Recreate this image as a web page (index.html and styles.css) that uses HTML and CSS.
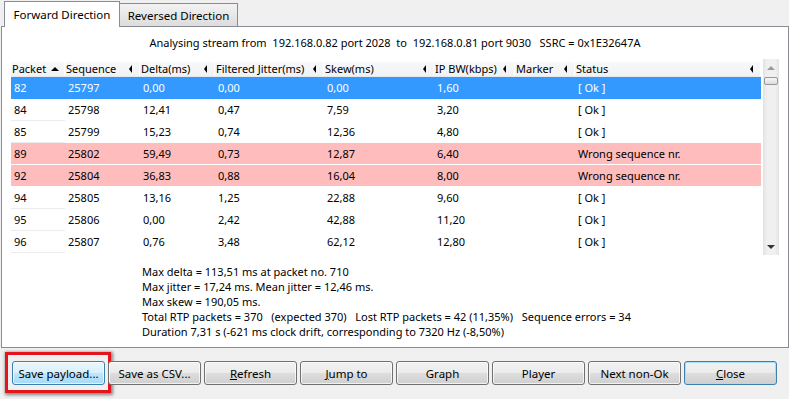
FILE: index.html
```html
<!DOCTYPE html>
<html lang="en">
<head>
<meta charset="UTF-8">
<title>RTP Stream Analysis</title>
<link rel="stylesheet" href="styles.css">
</head>
<body>

<div class="tabs">
    <div class="tab active">Forward Direction</div>
    <div class="tab">Reversed Direction</div>
</div>

<div class="panel">
    <div class="caption">Analysing stream from  192.168.0.82 port 2028  to  192.168.0.81 port 9030   SSRC = 0x1E32647A</div>

    <div class="list">
        <div class="grid">
            <div class="head">
                <div class="hcell"><span class="htext">Packet</span><i class="arrow-up"></i></div>
                <div class="hcell"><span class="htext">Sequence</span><i class="arrow-left"></i></div>
                <div class="hcell"><span class="htext">Delta(ms)</span><i class="arrow-left"></i></div>
                <div class="hcell"><span class="htext">Filtered Jitter(ms)</span><i class="arrow-left"></i></div>
                <div class="hcell"><span class="htext">Skew(ms)</span><i class="arrow-left"></i></div>
                <div class="hcell narrow"><span class="htext">IP BW(kbps)</span><i class="arrow-left"></i></div>
                <div class="hcell"><span class="htext">Marker</span><i class="arrow-left"></i></div>
                <div class="hcell"><span class="htext">Status</span><i class="arrow-left"></i></div>
            </div>

            <div class="row selected">
                <span>82</span><span>25797</span><span>0,00</span><span>0,00</span><span>0,00</span><span>1,60</span><span></span><span>[ Ok ]</span>
            </div>
            <div class="row">
                <span>84</span><span>25798</span><span>12,41</span><span>0,47</span><span>7,59</span><span>3,20</span><span></span><span>[ Ok ]</span>
            </div>
            <div class="row">
                <span>85</span><span>25799</span><span>15,23</span><span>0,74</span><span>12,36</span><span>4,80</span><span></span><span>[ Ok ]</span>
            </div>
            <div class="row error">
                <span>89</span><span>25802</span><span>59,49</span><span>0,73</span><span>12,87</span><span>6,40</span><span></span><span>Wrong sequence nr.</span>
            </div>
            <div class="row error">
                <span>92</span><span>25804</span><span>36,83</span><span>0,88</span><span>16,04</span><span>8,00</span><span></span><span>Wrong sequence nr.</span>
            </div>
            <div class="row">
                <span>94</span><span>25805</span><span>13,16</span><span>1,25</span><span>22,88</span><span>9,60</span><span></span><span>[ Ok ]</span>
            </div>
            <div class="row">
                <span>95</span><span>25806</span><span>0,00</span><span>2,42</span><span>42,88</span><span>11,20</span><span></span><span>[ Ok ]</span>
            </div>
            <div class="row">
                <span>96</span><span>25807</span><span>0,76</span><span>3,48</span><span>62,12</span><span>12,80</span><span></span><span>[ Ok ]</span>
            </div>
        </div>

        <div class="scrollbar">
            <div class="sb-btn"><i class="sb-up"></i></div>
            <div class="sb-thumb"></div>
            <div class="sb-track"></div>
            <div class="sb-btn"><i class="sb-down"></i></div>
        </div>
    </div>

    <div class="stats">Max delta = 113,51 ms at packet no. 710
Max jitter = 17,24 ms. Mean jitter = 12,46 ms.
Max skew = 190,05 ms.
Total RTP packets = 370   (expected 370)   Lost RTP packets = 42 (11,35%)   Sequence errors = 34
Duration 7,31 s (-621 ms clock drift, corresponding to 7320 Hz (-8,50%)</div>
</div>

<div class="buttons">
    <div class="mark"><button class="btn hot">Save payload...</button></div>
    <button class="btn">Save as CSV...</button>
    <button class="btn"><u>R</u>efresh</button>
    <button class="btn"><u>J</u>ump to</button>
    <button class="btn">Graph</button>
    <button class="btn">Player</button>
    <button class="btn">Next non-Ok</button>
    <button class="btn default"><u>C</u>lose</button>
</div>

</body>
</html>
```

FILE: styles.css
```css
body {
    margin: 0;
    width: 789px;
    height: 399px;
    overflow: hidden;
    background-color: #f0f0f0;
    font-family: "Noto Sans", sans-serif;
    font-size: 11px;
    color: #000;
}
.tabs {
    display: flex;
    align-items: flex-end;
    height: 26px;
    padding-left: 4px;
    font-size: 11.5px;
}
.tab {
    box-sizing: border-box;
    width: 118px;
    height: 23px;
    line-height: 23px;
    text-align: center;
    border: 1px solid #898c95;
    border-bottom: none;
    border-left: none;
    background: linear-gradient(#f3f3f3, #e6e6e6 55%, #dcdcdc);
}
.tab.active {
    position: relative;
    z-index: 1;
    width: 116px;
    height: 26px;
    margin-bottom: -1px;
    line-height: 26px;
    border-left: 1px solid #898c95;
    background-color: #fff;
    background-image: none;
}
.panel {
    width: 786px;
    height: 320px;
    margin-left: 1px;
    border: 1px solid #898c95;
    background-color: #fff;
}
.caption {
    padding-top: 8px;
    line-height: 16px;
    text-align: center;
    white-space: pre;
}
.list {
    display: flex;
    height: 196px;
    margin: 8px 0 0 9px;
}
.grid {
    width: 750px;
}
.head, .row {
    display: grid;
    grid-template-columns: 54px 75px 75px 109px 110px 81px 60px 186px;
}
.head {
    height: 17px;
    padding-top: 2px;
    box-sizing: border-box;
    background: linear-gradient(#f8f9fa, #f1f2f4);
    box-shadow: inset 0 3px #fff, 0 1px #e7e8ea;
}
.hcell {
    display: flex;
    align-items: center;
    padding: 0 7px 0 1px;
    border-right: 1px solid #fff;
    overflow: hidden;
}
.hcell.narrow {
    padding-right: 9px;
}
.htext {
    flex: 1;
    overflow: hidden;
    white-space: nowrap;
}
.narrow .htext {
    flex: none;
    width: 66px;
    margin-right: 2px;
}
.arrow-left {
    width: 0;
    height: 0;
    border-top: 4px solid transparent;
    border-bottom: 4px solid transparent;
    border-right: 3px solid #000;
}
.arrow-up {
    width: 0;
    height: 0;
    margin-right: -2px;
    border-left: 4px solid transparent;
    border-right: 4px solid transparent;
    border-bottom: 4px solid #000;
}
.row {
    height: 22px;
    line-height: 22px;
}
.head + .row {
    margin-top: 1px;
}
.row span {
    padding-left: 3px;
    white-space: nowrap;
}
.row span:first-child {
    box-shadow: inset 0 -1px #ececec;
}
.row.selected {
    background-color: #3399ff;
    color: #fff;
}
.row.selected span:first-child,
.row.error span:first-child {
    box-shadow: none;
}
.row.error {
    background-color: #ffbcbc;
    box-shadow: inset 0 -1px #fff;
}
.scrollbar {
    display: flex;
    flex-direction: column;
    width: 16px;
    margin-left: 2px;
    background: linear-gradient(to right, #e2e2e2, #f0f0f0 25%, #f0f0f0 75%, #e4e4e4);
}
.sb-btn {
    height: 17px;
    display: flex;
    align-items: center;
    justify-content: center;
}
.sb-up {
    border-left: 4px solid transparent;
    border-right: 4px solid transparent;
    border-bottom: 4px solid #9a9a9a;
}
.sb-down {
    border-left: 4px solid transparent;
    border-right: 4px solid transparent;
    border-top: 4px solid #333;
}
.sb-thumb {
    height: 6px;
    margin: 1px 1px 0;
    border: 1px solid #979797;
    border-radius: 2px;
    background: linear-gradient(#f6f6f6, #dcdcdc);
}
.sb-track {
    flex: 1;
}
.stats {
    margin: 9px 0 0 140px;
    line-height: 15px;
    white-space: pre;
}
.buttons {
    display: flex;
    align-items: flex-start;
    gap: 3px;
    padding: 13px 0 0 12px;
}
.btn {
    box-sizing: border-box;
    width: 93px;
    height: 24px;
    padding: 0;
    border: 1px solid #707070;
    border-radius: 3px;
    background: linear-gradient(#f2f2f2, #ebebeb 48%, #dddddd 52%, #cfcfcf);
    box-shadow: inset 0 0 0 1px rgba(255, 255, 255, 0.7);
    font-family: inherit;
    font-size: 11.5px;
    color: #000;
    text-align: center;
}
.btn.hot {
    border-color: #3c7fb1;
    background: linear-gradient(#eaf6fd, #d9f0fc 48%, #bee6fd 52%, #a7d9f5);
}
.btn.default {
    border-color: #3c7fb1;
    box-shadow: inset 0 0 0 1px #a9dcf6;
}
.mark {
    display: flex;
    margin: -9px -6px -8px -7px;
    padding: 6px 3px 5px 4px;
    border: 3px solid #e3141b;
    box-shadow: 1px 1px 3px 1px rgba(0, 0, 0, 0.45);
}
```
